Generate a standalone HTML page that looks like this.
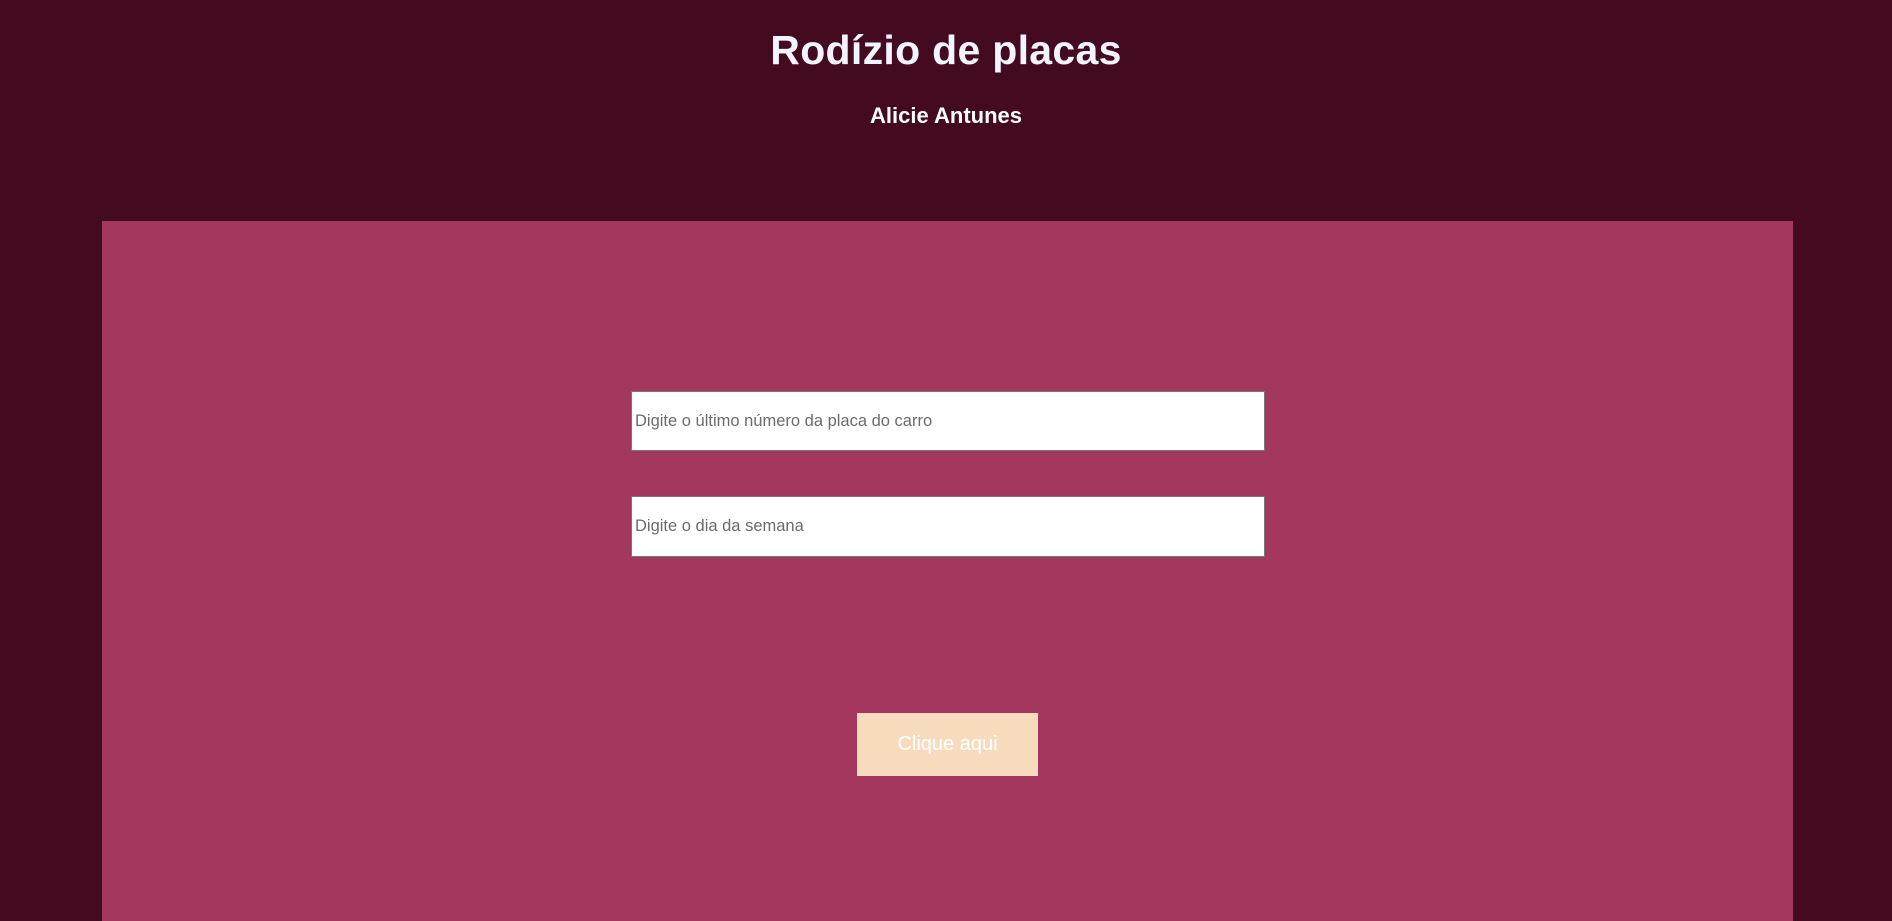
<!DOCTYPE html>
<html><head><meta charset="utf-8"><style>
html,body{margin:0;padding:0;width:1892px;height:895px;overflow:hidden;background:#440a20;}
h1{position:absolute;left:0;width:1892px;top:27px;margin:0;text-align:center;color:#f2f4ff;font:bold 41px "Liberation Sans",sans-serif;letter-spacing:0.3px;}
h2{position:absolute;left:0;width:1892px;top:103px;margin:0;text-align:center;color:#fff;font:bold 22px "Liberation Sans",sans-serif;}
.panel{position:absolute;left:102px;top:221px;width:1691px;height:700px;background:#a3375d;}
.in{position:absolute;left:631px;width:634px;height:60px;background:#fff;border:1px solid #767676;box-sizing:border-box;font:16.5px "Liberation Sans",sans-serif;color:#6b6b6b;line-height:58px;padding-left:3px;}
.btn{position:absolute;left:857px;top:713px;width:181px;height:63px;background:#f7dbbd;color:#fff;font:20px "Liberation Sans",sans-serif;text-align:center;line-height:63px;}
</style></head><body>
<h1>Rodízio de placas</h1>
<h2>Alicie Antunes</h2>
<div class="panel"></div>
<div class="in" style="top:391px">Digite o último número da placa do carro</div>
<div class="in" style="top:496px;height:61px">Digite o dia da semana</div>
<div class="btn">Clique aqui</div>
</body></html>
